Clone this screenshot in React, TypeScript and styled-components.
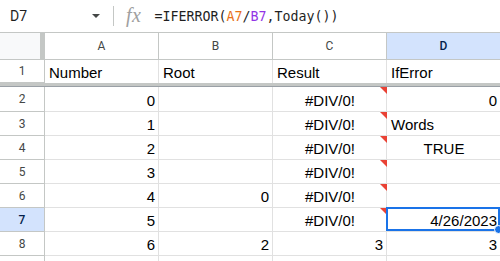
import styled, { createGlobalStyle } from 'styled-components'

const GlobalStyle = createGlobalStyle`
  html, body {
    margin: 0;
    padding: 0;
    background: #fff;
    overflow: hidden;
  }
`

type CellData = {
  text?: string
  align?: 'left' | 'center' | 'right'
  error?: boolean
  selected?: boolean
}

const columns = ['A', 'B', 'C', 'D']

const headerRow: CellData[] = [
  { text: 'Number' },
  { text: 'Root' },
  { text: 'Result' },
  { text: 'IfError' },
]

const err: CellData = { text: '#DIV/0!', align: 'center', error: true }

const rows: CellData[][] = [
  [{ text: '0', align: 'right' }, {}, err, { text: '0', align: 'right' }],
  [{ text: '1', align: 'right' }, {}, err, { text: 'Words' }],
  [{ text: '2', align: 'right' }, {}, err, { text: 'TRUE', align: 'center' }],
  [{ text: '3', align: 'right' }, {}, err, {}],
  [{ text: '4', align: 'right' }, { text: '0', align: 'right' }, err, {}],
  [{ text: '5', align: 'right' }, {}, err, { text: '4/26/2023', align: 'right', selected: true }],
  [
    { text: '6', align: 'right' },
    { text: '2', align: 'right' },
    { text: '3', align: 'right' },
    { text: '3', align: 'right' },
  ],
]

export default function App() {
  return (
    <>
      <GlobalStyle />
      <Page>
        <FormulaBar>
          <NameBox>D7</NameBox>
          <Caret />
          <Divider />
          <Fx>fx</Fx>
          <Formula>
            =IFERROR(<RefA>A7</RefA>/<RefB>B7</RefB>,Today())
          </Formula>
        </FormulaBar>

        <Grid>
          <Corner />
          {columns.map((c) => (
            <ColHead key={c} $active={c === 'D'}>
              {c}
            </ColHead>
          ))}

          <RowNum $h={23}>1</RowNum>
          {headerRow.map((cell, i) => (
            <Cell key={i} $h={23} $align="left" $noBottom>
              {cell.text}
            </Cell>
          ))}

          <Freeze />

          {rows.map((row, r) => (
            <Row key={r} num={r + 2} cells={row} h={r === 0 ? 25 : 24} />
          ))}

          {/* next row, only its top edge shows */}
          <RowNum $h={24} />
          {columns.map((c) => (
            <Cell key={c} $h={24} $align="left" />
          ))}
        </Grid>
      </Page>
    </>
  )
}

const Row = ({ num, cells, h }: { num: number; cells: CellData[]; h: number }) => {
  return (
    <>
      <RowNum $h={h} $active={num === 7}>
        {num}
      </RowNum>
      {cells.map((cell, i) => (
        <Cell key={i} $h={h} $align={cell.align ?? 'left'}>
          {cell.text}
          {cell.error && <ErrorMark />}
          {cell.selected && (
            <Selection>
              <Handle />
            </Selection>
          )}
        </Cell>
      ))}
    </>
  )
}

const Page = styled.div`
  width: 500px;
  height: 261px;
  overflow: hidden;
  background: #fff;
`

const FormulaBar = styled.div`
  display: flex;
  align-items: center;
  height: 32px;
  border-bottom: 1px solid #c4c7c5;
  font-family: Roboto, 'Liberation Sans', sans-serif;
`

const NameBox = styled.div`
  width: 78px;
  padding-left: 10px;
  font-size: 14px;
  color: #1f1f1f;
`

const Caret = styled.div`
  width: 0;
  height: 0;
  border-left: 4px solid transparent;
  border-right: 4px solid transparent;
  border-top: 4px solid #444746;
  margin-left: 4px;
`

const Divider = styled.div`
  width: 1px;
  height: 20px;
  background: #c4c7c5;
  margin-left: 13px;
`

const Fx = styled.div`
  margin-left: 12px;
  font-family: 'Liberation Serif', serif;
  font-style: italic;
  font-size: 20px;
  color: #a0a0a0;
  letter-spacing: 0.5px;
  line-height: 1;
  margin-top: -2px;
`

const Formula = styled.div`
  margin-left: 13px;
  font-family: 'DejaVu Sans Mono', 'Liberation Mono', monospace;
  font-size: 13.3px;
  color: #1f1f1f;
  white-space: nowrap;
`

const RefA = styled.span`
  color: #e8711a;
`

const RefB = styled.span`
  color: #9334e6;
`

const Grid = styled.div`
  display: grid;
  grid-template-columns: 45px 114px 114px 114px 114px;
  font-family: 'Liberation Sans', Arial, sans-serif;
`

const Corner = styled.div`
  height: 27px;
  box-sizing: border-box;
  background: #f8f9fa;
  border-right: 5px solid #c4c7c5;
  border-bottom: 1px solid #c4c7c5;
`

const ColHead = styled.div<{ $active?: boolean }>`
  height: 27px;
  box-sizing: border-box;
  display: flex;
  align-items: center;
  justify-content: center;
  font-family: Roboto, 'Liberation Sans', sans-serif;
  font-size: 12px;
  color: ${(p) => (p.$active ? '#041e49' : '#444746')};
  font-weight: ${(p) => (p.$active ? 500 : 400)};
  background: ${(p) => (p.$active ? '#d3e3fd' : '#fff')};
  border-right: 1px solid #c4c7c5;
  border-bottom: 1px solid #c4c7c5;
`

const RowNum = styled.div<{ $h: number; $active?: boolean }>`
  height: ${(p) => p.$h}px;
  box-sizing: border-box;
  display: flex;
  align-items: center;
  justify-content: center;
  font-family: Roboto, 'Liberation Sans', sans-serif;
  font-size: 12px;
  color: ${(p) => (p.$active ? '#041e49' : '#444746')};
  font-weight: ${(p) => (p.$active ? 500 : 400)};
  background: ${(p) => (p.$active ? '#d3e3fd' : '#fff')};
  border-right: 1px solid #c4c7c5;
  border-bottom: 1px solid #c4c7c5;
`

const Cell = styled.div<{ $h: number; $align: string; $noBottom?: boolean }>`
  position: relative;
  height: ${(p) => p.$h}px;
  box-sizing: border-box;
  display: flex;
  align-items: flex-end;
  justify-content: ${(p) =>
    p.$align === 'right' ? 'flex-end' : p.$align === 'center' ? 'center' : 'flex-start'};
  padding: 0 3px 1px 4px;
  font-size: 15px;
  line-height: 18px;
  color: #000;
  white-space: nowrap;
  border-right: 1px solid #e1e1e1;
  border-bottom: ${(p) => (p.$noBottom ? 'none' : '1px solid #e1e1e1')};
`

const Freeze = styled.div`
  grid-column: 1 / -1;
  height: 4px;
  background: #c4c7c5;
  border-bottom: 1px solid #9aa0a6;
  box-sizing: border-box;
`

const ErrorMark = styled.span`
  position: absolute;
  top: 0;
  right: -1px;
  width: 0;
  height: 0;
  border-top: 7px solid #e94235;
  border-left: 7px solid transparent;
`

const Selection = styled.span`
  position: absolute;
  top: -1px;
  left: -1px;
  right: 0;
  bottom: 0;
  border: 2px solid #1a73e8;
`

const Handle = styled.span`
  position: absolute;
  right: -5px;
  bottom: -5px;
  width: 7px;
  height: 7px;
  border-radius: 50%;
  background: #1a73e8;
  border: 1px solid #fff;
`
